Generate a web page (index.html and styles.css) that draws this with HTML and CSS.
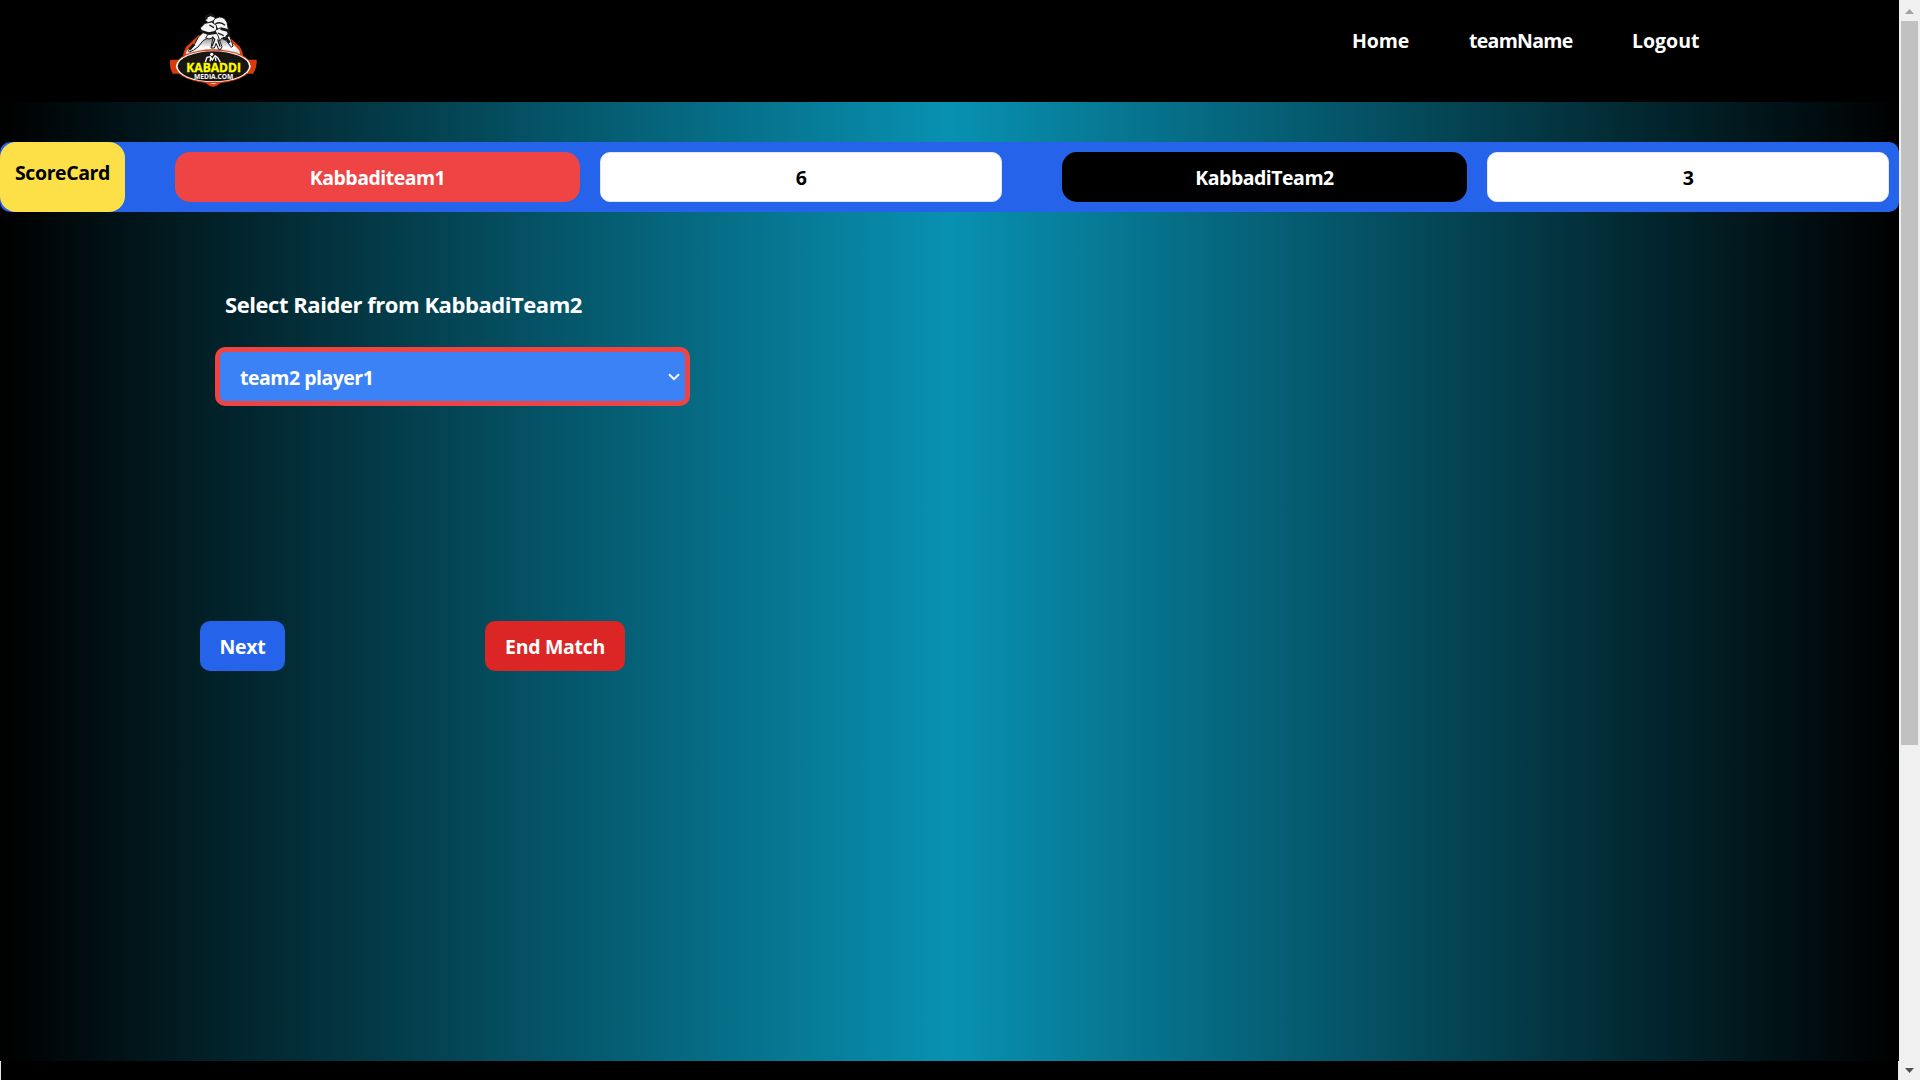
FILE: index.html
```html
<!DOCTYPE html>
<html lang="en">
<head>
<meta charset="utf-8">
<title>Kabaddi Media</title>
<link rel="stylesheet" href="styles.css">
</head>
<body>
<div class="page">
  <header class="header">
    <svg class="logo" viewBox="0 0 330 270" role="img" aria-label="Kabaddi Media">
      <defs>
        <linearGradient id="silver" x1="0" y1="0" x2="0" y2="1">
          <stop offset="0" stop-color="#888"/><stop offset=".6" stop-color="#fff"/><stop offset="1" stop-color="#ccc"/>
        </linearGradient>
      </defs>
      <path d="M31 164h37v42H38q-12-21-7-42zM252 164h38q2 21-10 42h-28z" fill="#d73b0b"/>
      <path d="M116 90L80 124q-8 10-11 29h181q-5-22-12-29l-36-34z" fill="#dc400d"/>
      <path d="M122 96l-42 42q-4 6-2 12h162q2-9-4-16l-36-38z" fill="url(#silver)"/>
      <path d="M124 224h72l-26 18q-12 6-22 0z" fill="#dc400d"/>
      <path d="M142 232h35l-17 6z" fill="#fff"/>
      <ellipse cx="160" cy="184" rx="114" ry="51" fill="#dc400d"/>
      <ellipse cx="160" cy="184" rx="112" ry="47" fill="#fff"/>
      <ellipse cx="160" cy="184" rx="107" ry="45" fill="#181512"/>
      <g fill="#f5f5f5" stroke="#191919" stroke-width="3" stroke-linejoin="round">
        <path d="M160 48l4-7 14-5q16 0 23 16l5 26-5 16-17-5-10-18-14-12z"/>
        <path d="M137 46l-1-9 11-7 14 2 5 9-10 9-12 3z"/>
        <path d="M121 69l14-14 20-4 14 10 2 18-20 6-8 14-14 8-15 19-13 9-13 6-3-5 16-13 14-27 13-12z"/>
        <path d="M166 76l14-7 18 5 9 14 8 22 4 13-5 4-14-19-14-9-7 9-13-8z"/>
        <path d="M147 83l20-3 8 14 3 11 8 20-4 8h-6l-8-18-5 14h-10l3-17 3-14-12 4-10-3z"/>
      </g>
      <path d="M119 77l28 9 21-3M182 71l21 5M138 43l2-9 12-5 11 5M205 75l2 13-9 9M188 99l13 3 8 11M102 118l-14 16" fill="none" stroke="#171717" stroke-width="8"/>
      <path d="M166 57q15-9 29 4M148 60l14 8M174 84l17 8M157 95l7 9-8 20M173 103l7 22" fill="none" stroke="#171717" stroke-width="4"/>
      <circle cx="155" cy="148" r="5" fill="#fff"/>
      <path d="M136 171l5-14 10-2 6 10 8-13 8 6 8 14M153 155l-3 14M166 157l2 11" fill="none" stroke="#fff" stroke-width="4"/>
      <text class="logo-name" x="79" y="200" textLength="164" lengthAdjust="spacingAndGlyphs">KABADDI</text>
      <text class="logo-site" x="102" y="221" textLength="118" lengthAdjust="spacingAndGlyphs">MEDIA.COM</text>
    </svg>
    <nav class="nav"><a class="home">Home</a><a class="team-name">teamName</a><a class="logout">Logout</a></nav>
  </header>
  <section class="scorecard">
    <div class="label">ScoreCard</div>
    <div class="side">
      <div class="team red">Kabbaditeam1</div>
      <div class="score">6</div>
    </div>
    <div class="side">
      <div class="team black">KabbadiTeam2</div>
      <div class="score">3</div>
    </div>
  </section>
  <main class="main">
    <h1 class="title">Select Raider from KabbadiTeam2</h1>
    <div class="select" role="combobox"><span>team2 player1</span>
      <svg class="chevron" viewBox="0 0 12 8"><path d="M1 1.200l5 5 5-5"/></svg>
    </div>
    <div class="actions">
      <button class="btn next">Next</button>
      <button class="btn end">End Match</button>
    </div>
  </main>
  <footer class="footer"></footer>
</div>
<aside class="scrollbar">
  <svg class="arrow up" viewBox="0 0 9 5"><path d="M0 5L4.500 0 9 5z"/></svg>
  <div class="thumb"></div>
  <svg class="arrow down" viewBox="0 0 9 5"><path d="M0 0h9L4.500 5z"/></svg>
</aside>
</body>
</html>
```
FILE: styles.css
```css
* { box-sizing: border-box; }
body {
  margin: 0;
  height: 1080px;
  display: flex;
  overflow: hidden;
  color: #fff;
  font: 700 19.5px/30px "Open Sans", "Noto Sans", sans-serif;
  letter-spacing: -0.5px;
}
.page {
  width: 1899px;
  display: flex;
  flex-direction: column;
  background: linear-gradient(90deg, #000, #0891b2, #000);
}
.header {
  height: 102px;
  flex: none;
  display: flex;
  justify-content: space-between;
  padding: 5px 200px 0 160px;
  background: #000;
}
.logo { width: 110px; height: 90px; letter-spacing: 0; }
.logo-name { font: 700 35px "Open Sans", sans-serif; fill: #ff0; stroke: #ff0; stroke-width: 1; }
.logo-site { font: 700 19px "Open Sans", sans-serif; fill: #fff; }
.nav { display: flex; gap: 60px; padding-top: 21px; white-space: nowrap; }
.home { width: 57px; letter-spacing: -0.1px; }
.team-name { width: 103px; letter-spacing: -0.7px; }
.logout { width: 67px; letter-spacing: 0; }
.scorecard {
  height: 70px;
  flex: none;
  display: flex;
  margin-top: 40px;
  border-radius: 10px;
  background: #2563eb;
}
.label {
  width: 125px;
  padding: 16px 0 0 15px;
  border-radius: 16px;
  background: #fde047;
  color: #000;
  letter-spacing: -0.4px;
}
.side { display: flex; gap: 20px; margin-left: 50px; padding: 10px 0; }
.side + .side { margin-left: 60px; }
.team, .score { height: 50px; padding-top: 11px; text-align: center; }
.team { width: 405px; border-radius: 15px; letter-spacing: -0.5px; }
.red { background: #ef4444; }
.black { background: #000; }
.score {
  width: 402px;
  padding-top: 10px;
  border: 1px solid #e5e7eb;
  border-radius: 10px;
  background: #fff;
  color: #000;
}
.main { height: 849px; flex: none; padding: 77px 0 0 200px; }
.title { margin: 0 0 0 25px; font-size: 22px; line-height: 30px; letter-spacing: -0.45px; }
.select {
  width: 475px;
  height: 59px;
  margin: 28px 0 0 15px;
  padding: 0 5px 0 20px;
  display: flex;
  align-items: center;
  justify-content: space-between;
  border: 5px solid #ef4444;
  border-radius: 10px;
  background: #3b82f6;
}
.select span { padding-top: 2px; }
.chevron { width: 12px; height: 8px; fill: none; stroke: #fff; stroke-width: 2; }
.actions { display: flex; gap: 200px; margin-top: 215px; }
.btn {
  height: 50px;
  padding: 2px 0 0;
  border: 0;
  border-radius: 10px;
  color: #fff;
  font: inherit;
  letter-spacing: -0.3px;
}
.next { width: 85px; background: #2563eb; }
.end { width: 140px; background: #dc2626; }
.footer { height: 19px; flex: none; border: solid #e5e7eb; border-width: 0 1px; background: #000; }
.scrollbar {
  width: 21px;
  display: flex;
  flex-direction: column;
  align-items: center;
  padding: 9px 1px 7px 0;
  background: #f0f0f0;
}
.thumb { width: 17px; height: 724px; margin: 7px 0 auto; background: #c1c1c1; }
.arrow { width: 9px; height: 5px; flex: none; }
.up { fill: #a3a3a3; }
.down { fill: #505050; }
```
